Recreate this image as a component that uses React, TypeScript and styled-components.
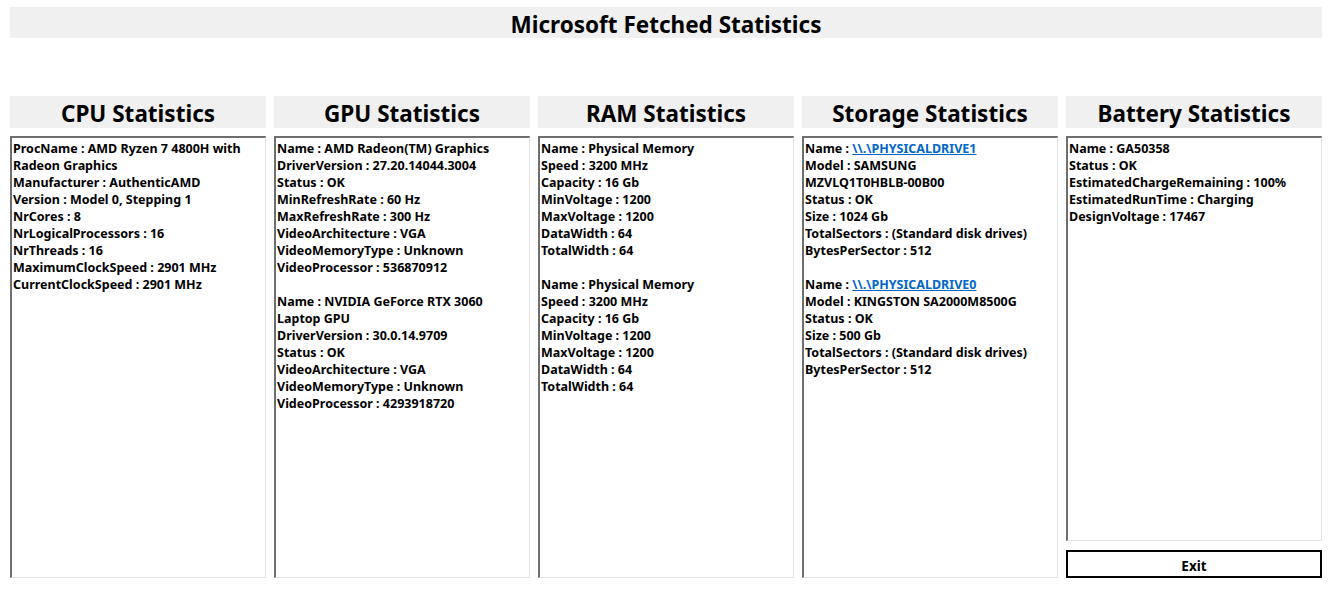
import React from "react";
import styled, { createGlobalStyle } from "styled-components";

const Global = createGlobalStyle`
  html, body { margin: 0; padding: 0; background: #ffffff; }
  body { font-family: "Noto Sans", "Open Sans", sans-serif; }
`;

const Page = styled.div`
  width: 1339px;
  height: 597px;
  box-sizing: border-box;
  padding: 7px 17px 0 10px;
  display: flex;
  flex-direction: column;
`;

const TitleBar = styled.div`
  height: 31px;
  box-sizing: border-box;
  padding-top: 5px;
  background: #f0f0f0;
  display: flex;
  align-items: center;
  justify-content: center;
  font-family: "Noto Sans", sans-serif;
  font-weight: 700;
  font-size: 22.5px;
  line-height: 26px;
  color: #000;
`;

const Columns = styled.div`
  margin-top: 58px;
  display: grid;
  grid-template-columns: repeat(5, 256px);
  column-gap: 8px;
`;

const Column = styled.div`
  display: flex;
  flex-direction: column;
  height: 482px;
`;

const Header = styled.div`
  flex: 0 0 32px;
  min-height: 0;
  box-sizing: border-box;
  padding-top: 4px;
  background: #f0f0f0;
  display: flex;
  align-items: center;
  justify-content: center;
  font-family: "Noto Sans", sans-serif;
  font-weight: 700;
  font-size: 22.5px;
  line-height: 28px;
  color: #000;
`;

const Box = styled.div<{ $short?: boolean }>`
  margin-top: 8px;
  flex: ${(p) => (p.$short ? "0 0 405px" : "1 1 auto")};
  min-height: 0;
  box-sizing: border-box;
  border-top: 2px solid #6e6e6e;
  border-left: 2px solid #6e6e6e;
  border-right: 1px solid #e3e3e3;
  border-bottom: 1px solid #e3e3e3;
  padding: 2px 4px 0 1px;
  font-family: "Noto Sans", sans-serif;
  font-weight: 700;
  font-size: 12.5px;
  line-height: 17px;
  color: #000;
`;

const Line = styled.div`
  white-space: normal;
`;

const Gap = styled.div`
  height: 17px;
`;

const Link = styled.a`
  color: #0066cc;
  text-decoration: underline;
`;

const ExitButton = styled.button`
  margin-top: 9px;
  flex: 0 0 28px;
  box-sizing: border-box;
  border: 2px solid #000;
  background: #fff;
  font-family: "Noto Sans", sans-serif;
  font-weight: 700;
  font-size: 13.5px;
  line-height: 1;
  padding: 5px 0 0 0;
  color: #000;
`;

type Entry = string | string[] | { link: string; label: string } | null;

const cpu: Entry[] = [
  "ProcName : AMD Ryzen 7 4800H with Radeon Graphics",
  "Manufacturer : AuthenticAMD",
  "Version : Model 0, Stepping 1",
  "NrCores : 8",
  "NrLogicalProcessors : 16",
  "NrThreads : 16",
  "MaximumClockSpeed : 2901 MHz",
  "CurrentClockSpeed : 2901 MHz",
];

const gpu: Entry[] = [
  "Name : AMD Radeon(TM) Graphics",
  "DriverVersion : 27.20.14044.3004",
  "Status : OK",
  "MinRefreshRate : 60 Hz",
  "MaxRefreshRate : 300 Hz",
  "VideoArchitecture : VGA",
  "VideoMemoryType : Unknown",
  "VideoProcessor : 536870912",
  null,
  ["Name : NVIDIA GeForce RTX 3060", "Laptop GPU"],
  "DriverVersion : 30.0.14.9709",
  "Status : OK",
  "VideoArchitecture : VGA",
  "VideoMemoryType : Unknown",
  "VideoProcessor : 4293918720",
];

const ramBlock: Entry[] = [
  "Name : Physical Memory",
  "Speed : 3200 MHz",
  "Capacity : 16 Gb",
  "MinVoltage : 1200",
  "MaxVoltage : 1200",
  "DataWidth : 64",
  "TotalWidth : 64",
];
const ram: Entry[] = [...ramBlock, null, ...ramBlock];

const storage: Entry[] = [
  { label: "Name : ", link: "\\\\.\\PHYSICALDRIVE1" },
  ["Model : SAMSUNG", "MZVLQ1T0HBLB-00B00"],
  "Status : OK",
  "Size : 1024 Gb",
  "TotalSectors : (Standard disk drives)",
  "BytesPerSector : 512",
  null,
  { label: "Name : ", link: "\\\\.\\PHYSICALDRIVE0" },
  "Model : KINGSTON SA2000M8500G",
  "Status : OK",
  "Size : 500 Gb",
  "TotalSectors : (Standard disk drives)",
  "BytesPerSector : 512",
];

const battery: Entry[] = [
  "Name : GA50358",
  "Status : OK",
  "EstimatedChargeRemaining : 100%",
  "EstimatedRunTime : Charging",
  "DesignVoltage : 17467",
];

const Lines: React.FC<{ items: Entry[] }> = ({ items }) => (
  <>
    {items.map((it, i) => {
      if (it === null) return <Gap key={i} />;
      if (typeof it === "string") return <Line key={i}>{it}</Line>;
      if (Array.isArray(it))
        return (
          <Line key={i}>
            {it[0]}
            <br />
            {it[1]}
          </Line>
        );
      return (
        <Line key={i}>
          {it.label}
          <Link href="#">{it.link}</Link>
        </Line>
      );
    })}
  </>
);

export default function App() {
  return (
    <>
      <Global />
      <Page>
        <TitleBar>Microsoft Fetched Statistics</TitleBar>
        <Columns>
          <Column>
            <Header>CPU Statistics</Header>
            <Box>
              <Lines items={cpu} />
            </Box>
          </Column>
          <Column>
            <Header>GPU Statistics</Header>
            <Box>
              <Lines items={gpu} />
            </Box>
          </Column>
          <Column>
            <Header>RAM Statistics</Header>
            <Box>
              <Lines items={ram} />
            </Box>
          </Column>
          <Column>
            <Header>Storage Statistics</Header>
            <Box>
              <Lines items={storage} />
            </Box>
          </Column>
          <Column>
            <Header>Battery Statistics</Header>
            <Box $short>
              <Lines items={battery} />
            </Box>
            <ExitButton>Exit</ExitButton>
          </Column>
        </Columns>
      </Page>
    </>
  );
}
